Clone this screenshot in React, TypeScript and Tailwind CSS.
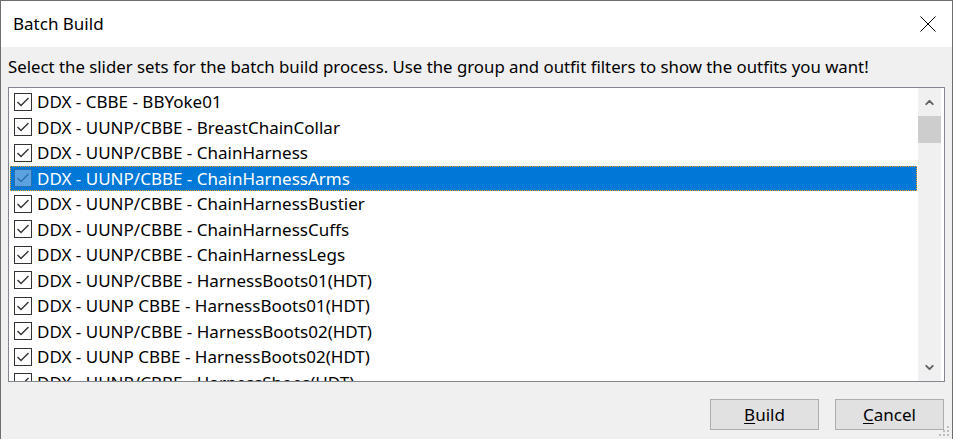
import { ChevronUp, ChevronDown } from "lucide-react";

const items = [
  "DDX - CBBE - BBYoke01",
  "DDX - UUNP/CBBE - BreastChainCollar",
  "DDX - UUNP/CBBE - ChainHarness",
  "DDX - UUNP/CBBE - ChainHarnessArms",
  "DDX - UUNP/CBBE - ChainHarnessBustier",
  "DDX - UUNP/CBBE - ChainHarnessCuffs",
  "DDX - UUNP/CBBE - ChainHarnessLegs",
  "DDX - UUNP/CBBE - HarnessBoots01(HDT)",
  "DDX - UUNP CBBE - HarnessBoots01(HDT)",
  "DDX - UUNP/CBBE - HarnessBoots02(HDT)",
  "DDX - UUNP CBBE - HarnessBoots02(HDT)",
  "DDX - UUNP/CBBE - HarnessShoes(HDT)",
];

const SELECTED = 3;

function CheckBox({ selected }: { selected: boolean }) {
  return (
    <svg width="18" height="18" viewBox="0 0 18 18" className="shrink-0">
      <rect
        x="0.5"
        y="0.5"
        width="17"
        height="17"
        fill={selected ? "#5aa3e0" : "#fff"}
        stroke={selected ? "#2a6fb0" : "#333"}
      />
      <polyline
        points="3.5,9 7,12.5 14.5,5"
        fill="none"
        stroke={selected ? "#2a6fb0" : "#333"}
        strokeWidth="1.4"
      />
    </svg>
  );
}

function Row({ label, selected }: { label: string; selected: boolean }) {
  return (
    <div
      className={
        selected
          ? "ml-[1px] mr-[1px] flex h-[25.5px] items-center gap-[5px] border border-dotted border-[#f5a300] bg-[#0078d7] pl-[3px] text-white"
          : "ml-[1px] mr-[1px] flex h-[25.5px] items-center gap-[5px] border border-transparent pl-[3px] text-black"
      }
    >
      <CheckBox selected={selected} />
      <span className="whitespace-nowrap">{label}</span>
    </div>
  );
}

function Gripper() {
  const dots = [
    [8, 0],
    [4, 4],
    [8, 4],
    [0, 8],
    [4, 8],
    [8, 8],
  ];
  return (
    <svg width="11" height="11" className="absolute bottom-[2px] right-[2px]">
      {dots.map(([x, y]) => (
        <rect key={`${x}-${y}`} x={x} y={y} width="2" height="2" fill="#bdbdbd" />
      ))}
    </svg>
  );
}

export default function App() {
  return (
    <div
      className="relative flex h-[439px] w-[953px] flex-col overflow-hidden border-x border-t border-[#6e6e6e] bg-[#f0f0f0] text-[17px] text-black"
      style={{ fontFamily: '"Segoe UI", "Noto Sans", sans-serif' }}
    >
      <div className="flex h-[46px] shrink-0 items-center justify-between bg-white pl-[12px] pr-[16px]">
        <span>Batch Build</span>
        <svg width="16" height="16" viewBox="0 0 16 16">
          <path d="M0.5 0.5 L15.5 15.5 M15.5 0.5 L0.5 15.5" stroke="#000" strokeWidth="1" />
        </svg>
      </div>

      <div className="flex flex-1 flex-col px-[7px]">
        <p className="mt-[7px] h-[26px] whitespace-nowrap text-[16.8px] leading-[26px]">
          Select the slider sets for the batch build process. Use the group and outfit filters to show the outfits you want!
        </p>

        <div className="mt-[7px] flex h-[295px] border border-[#828790] bg-white">
          <div className="flex-1 overflow-hidden pt-[1px]">
            {items.map((label, i) => (
              <Row key={label} label={label} selected={i === SELECTED} />
            ))}
          </div>
          <div className="mr-[3px] flex w-[23px] flex-col items-center bg-[#f0f0f0]">
            <div className="flex h-[28px] w-full items-center justify-center">
              <ChevronUp size={13} strokeWidth={3.5} color="#606060" />
            </div>
            <div className="h-[27px] w-full bg-[#cdcdcd]" />
            <div className="flex-1" />
            <div className="flex h-[28px] w-full items-center justify-center">
              <ChevronDown size={13} strokeWidth={3.5} color="#606060" />
            </div>
          </div>
        </div>

        <div className="mt-[17px] flex justify-end gap-[16px] pr-[1px]">
          <button className="h-[31px] w-[109px] border border-[#adadad] bg-[#e1e1e1]">
            <span className="underline underline-offset-2">B</span>uild
          </button>
          <button className="h-[31px] w-[109px] border border-[#adadad] bg-[#e1e1e1]">
            <span className="underline underline-offset-2">C</span>ancel
          </button>
        </div>
      </div>
      <Gripper />
    </div>
  );
}
